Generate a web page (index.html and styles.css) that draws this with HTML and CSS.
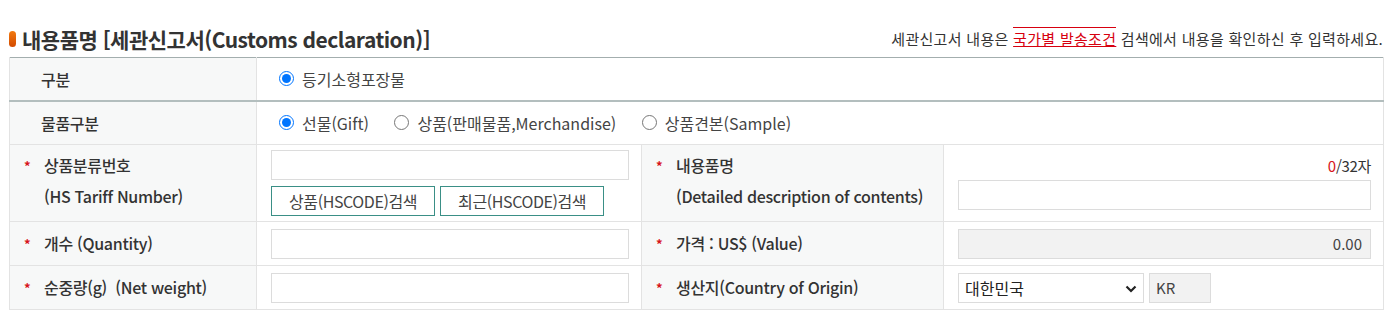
FILE: index.html
```html
<!DOCTYPE html>
<html lang="ko">
<head>
  <meta charset="utf-8">
  <title>내용품명</title>
  <link rel="stylesheet" href="styles.css">
</head>
<body>
  <div class="customs-box">
    <div class="customs-header">
      <h3 class="section-title"><span class="title-mark"></span>내용품명 [세관신고서(Customs declaration)]</h3>
      <p class="header-note">세관신고서 내용은 <a href="#" class="note-link">국가별 발송조건</a> 검색에서 내용을 확인하신 후 입력하세요.</p>
    </div>

    <table class="customs-table">
      <colgroup>
        <col class="col-label">
        <col class="col-value">
        <col class="col-label2">
        <col class="col-value2">
      </colgroup>
      <tr class="row-top">
        <th class="plain">구분</th>
        <td colspan="3" class="radio-cell">
          <label class="radio"><input type="radio" name="kind" checked> 등기소형포장물</label>
        </td>
      </tr>
      <tr>
        <th class="plain">물품구분</th>
        <td colspan="3" class="radio-cell">
          <label class="radio"><input type="radio" name="goods" checked> 선물(Gift)</label>
          <label class="radio"><input type="radio" name="goods"> 상품(판매물품,Merchandise)</label>
          <label class="radio"><input type="radio" name="goods"> 상품견본(Sample)</label>
        </td>
      </tr>
      <tr class="row-tall">
        <th>
          <div class="req"><span class="star">*</span>상품분류번호</div>
          <div class="sub">(HS Tariff Number)</div>
        </th>
        <td>
          <input type="text" class="text-input">
          <div class="btn-row">
            <button class="code-btn">상품(HSCODE)검색</button>
            <button class="code-btn">최근(HSCODE)검색</button>
          </div>
        </td>
        <th>
          <div class="req"><span class="star">*</span>내용품명</div>
          <div class="sub">(Detailed description of contents)</div>
        </th>
        <td>
          <div class="counter"><span class="count-now">0</span>/32자</div>
          <input type="text" class="text-input">
        </td>
      </tr>
      <tr>
        <th><div class="req"><span class="star">*</span>개수 (Quantity)</div></th>
        <td><input type="text" class="text-input"></td>
        <th><div class="req"><span class="star">*</span>가격 : US$ (Value)</div></th>
        <td><input type="text" class="text-input readonly" value="0.00" readonly></td>
      </tr>
      <tr>
        <th><div class="req"><span class="star">*</span>순중량(g)&nbsp; (Net weight)</div></th>
        <td><input type="text" class="text-input"></td>
        <th><div class="req"><span class="star">*</span>생산지(Country of Origin)</div></th>
        <td>
          <div class="origin">
            <div class="select-wrap">
              <select class="country-select">
                <option>대한민국</option>
              </select>
              <svg class="select-arrow" width="12" height="8" viewBox="0 0 12 8"><path d="M1.5 1.5 L6 6 L10.5 1.5" fill="none" stroke="#222" stroke-width="2.2"/></svg>
            </div>
            <span class="country-code">KR</span>
          </div>
        </td>
      </tr>
    </table>
  </div>
</body>
</html>
```

FILE: styles.css
```css
:root {
  --text: #333;
  --value-text: #444;
  --label-bg: #f7f8f8;
  --line: #e3e3e3;
  --line-strong: #a3aeae;
  --star: #d7141a;
  --teal: #3a8f86;
}

body {
  margin: 0;
  padding: 0 7px 0 9px;
  font-family: "Noto Sans CJK KR", "Noto Sans", sans-serif;
  color: var(--text);
  background: #fff;
}

.customs-header {
  display: flex;
  justify-content: space-between;
  align-items: center;
  padding-top: 26px;
  margin-bottom: 5px;
}

.section-title {
  margin: 0;
  display: flex;
  align-items: center;
  font-size: 21px;
  font-weight: 700;
  letter-spacing: -0.5px;
  line-height: 26px;
  color: #333;
}

.title-mark {
  display: inline-block;
  width: 7px;
  height: 16px;
  margin-right: 6px;
  border-radius: 4px;
  background: linear-gradient(#f27a10, #d24a00);
}

.header-note {
  margin: 0;
  font-size: 15px;
  letter-spacing: 0.3px;
  line-height: 22px;
  color: #333;
}

.note-link {
  color: #d7000f;
  text-decoration: underline;
  border-top: 1px solid #d7000f;
}

.customs-table {
  width: 100%;
  border-collapse: collapse;
  table-layout: fixed;
  border-top: 1px solid var(--line-strong);
  border-bottom: 1px solid var(--line);
}

.col-label { width: 247px; }
.col-value { width: 385px; }
.col-label2 { width: 302px; }
.col-value2 { width: 440px; }

.customs-table th,
.customs-table td {
  border: 1px solid var(--line);
  height: 44px;
  padding: 0 12px 0 14px;
  box-sizing: border-box;
  vertical-align: middle;
}

.customs-table tr:first-child th,
.customs-table tr:first-child td {
  border-top: 0;
}

.row-top th,
.row-top td {
  height: 43px;
  border-bottom: 2px solid #b3bebe;
}

.customs-table th {
  background: var(--label-bg);
  text-align: left;
  font-weight: 500;
  font-size: 16px;
  letter-spacing: -0.3px;
  color: #333;
  padding-left: 14px;
}

.customs-table th.plain {
  padding-left: 31px;
}

.req {
  line-height: 31px;
}

.star {
  display: inline-block;
  width: 20px;
  color: var(--star);
  font-size: 13px;
  font-weight: 700;
  vertical-align: top;
}

.sub {
  padding-left: 20px;
  line-height: 31px;
}

.radio-cell {
  padding-left: 22px !important;
  font-size: 16px;
  letter-spacing: 0;
  color: var(--value-text);
}

.radio {
  display: inline-flex;
  align-items: center;
  gap: 8px;
  margin-right: 21px;
}

.radio input {
  width: 15px;
  height: 15px;
  margin: 0;
}

.row-tall td,
.row-tall th {
  height: 77px;
}

.row-tall th {
  padding-bottom: 4px;
}

.text-input {
  display: block;
  width: 100%;
  height: 30px;
  box-sizing: border-box;
  border: 1px solid #dcdcdc;
  padding: 0 8px;
  font-family: inherit;
  font-size: 15px;
  color: var(--value-text);
  background: #fff;
}

.text-input.readonly {
  background: #f2f2f2;
  text-align: right;
}

.btn-row {
  display: flex;
  gap: 5px;
  margin-top: 6px;
}

.code-btn {
  height: 30px;
  padding: 0 17px;
  border: 1px solid var(--teal);
  background: #fff;
  font-family: inherit;
  font-size: 16px;
  letter-spacing: -0.4px;
  color: #444;
}

.counter {
  text-align: right;
  font-size: 15px;
  letter-spacing: -0.3px;
  line-height: 20px;
  margin-bottom: 4px;
  color: #333;
}

.count-now {
  color: var(--star);
}

.origin {
  display: flex;
  gap: 5px;
}

.select-wrap {
  position: relative;
  width: 186px;
}

.country-select {
  appearance: none;
  width: 100%;
  height: 30px;
  border: 1px solid #dcdcdc;
  padding: 0 6px;
  background: #fff;
  font-family: inherit;
  font-size: 16px;
  color: #222;
}

.select-arrow {
  position: absolute;
  right: 7px;
  top: 12px;
  pointer-events: none;
}

.country-code {
  width: 62px;
  height: 30px;
  box-sizing: border-box;
  border: 1px solid #dcdcdc;
  background: #f2f2f2;
  padding-left: 6px;
  line-height: 28px;
  font-size: 15px;
  color: #444;
}
```
